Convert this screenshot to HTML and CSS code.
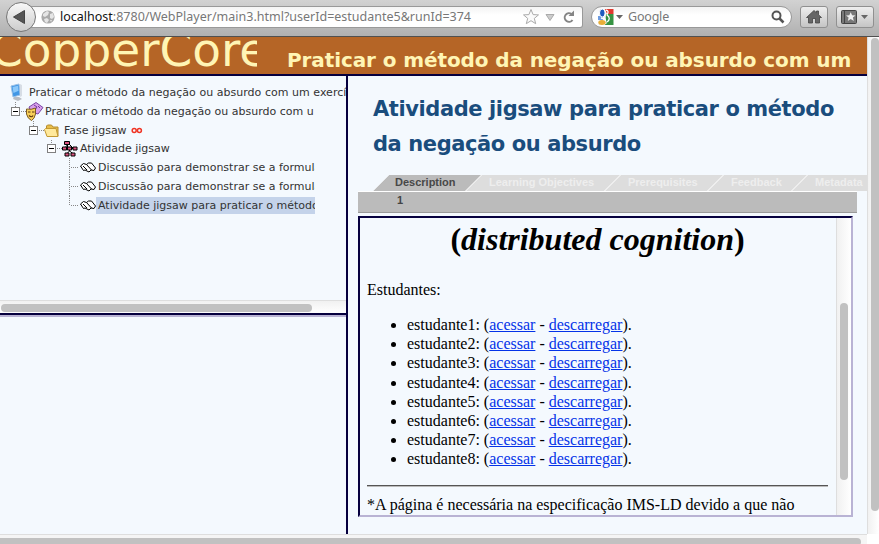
FILE: index.html
```html
<!DOCTYPE html>
<html lang="pt">
<head>
<meta charset="utf-8">
<title>CopperCore</title>
<link rel="stylesheet" href="styles.css">
</head>
<body>
<div class="window">
  <header class="toolbar">
    <div class="back"><svg width="30" height="30" viewBox="0 0 30 30"><path d="M7.500 15 18.500 8.500v13z" fill="#555" stroke="#444"/></svg></div>
    <div class="address">
      <svg class="globe" width="14" height="14" viewBox="0 0 14 14"><circle cx="7" cy="7" r="6.600" fill="#aaa"/><path d="M2 4 6 1l2 1-1 3-3 2-2-1zM9 4l3-1 1 4-2 2-2-1zM3 9l3-1 2 2-2 3-2-1zM9 10l2 0-1 2z" fill="#e5e5e5"/></svg>
      <div class="url"><b>localhost</b>:8780/WebPlayer/main3.html?userId=estudante5&amp;runId=374</div>
      <svg width="58" height="20" viewBox="0 0 58 20"><path d="m7 2.500 2.100 5.100 5.400.3-4.200 3.500 1.400 5.300L7 13.700l-4.700 3 1.400-5.300L-.5 7.900l5.400-.3z" fill="#fafafa" stroke="#aaa"/><path d="M22 7.500h8l-4 6z" fill="#ccc" stroke="#aaa"/><path d="M47.500 7A4.300 4.300 0 1 0 48.500 13" fill="none" stroke="#858585" stroke-width="2"/><path d="M44.500 9h5.500V3.500z" fill="#858585"/></svg>
    </div>
    <div class="search">
      <svg width="28" height="18" viewBox="0 0 28 18"><path d="M8 1h8.500v5H10z" fill="#e03a2f"/><path d="M9 6h7.500v11H8z" fill="#369342"/><path d="M1 8h7v9H1z" fill="#f4f7fb"/><path d="M1 8h5v4H1z" fill="#6d9be0"/><ellipse cx="5.300" cy="5" rx="2.800" ry="4" fill="#1e5bbf" stroke="#fff"/><path d="m4 10 4 1 1 4-3 2" fill="none" stroke="#fff" stroke-width="1.500"/><ellipse cx="5" cy="14.500" rx="3.700" ry="2.500" fill="#e9ae38"/><path d="M9 2c4 1 1 4 1 5 3 2 3 5 0 7" fill="none" stroke="#fff" stroke-width="1.300"/><path d="M19 7h7l-3.500 4z" fill="#666"/></svg>
      <span>Google</span>
      <svg width="14" height="14" viewBox="0 0 14 14"><circle cx="5.500" cy="5.500" r="4" fill="none" stroke="#555" stroke-width="2"/><path d="m8.500 8.500 4 4" stroke="#555" stroke-width="2.500"/></svg>
    </div>
    <div class="tool home"><svg width="18" height="16" viewBox="0 0 18 16"><path d="m1.500 8.500 7.500-7 2.500 2.300V2h2v3.800l3 2.700h-2V14h-4V9.500h-3V14h-4V8.500z" fill="#666" stroke="#444" stroke-width=".8"/></svg></div>
    <div class="tool marks"><svg width="30" height="16" viewBox="0 0 30 16"><rect x="1.500" y="1.500" width="15" height="13" rx="1" fill="#777" stroke="#444"/><path d="M4.500 2v12" stroke="#444"/><path d="m10.700 3.200 1.400 3 3.400.2-2.600 2.200.9 3.400-3.100-1.900-2.900 1.900.8-3.400L6 6.400l3.300-.2z" fill="#eee"/><path d="M21 6h7l-3.500 4z" fill="#666"/></svg></div>
  </header>
  <div class="viewport">
    <div class="page">
      <div class="banner">
        <div class="brand"><span>CopperCore</span></div>
        <div class="course">Praticar o método da negação ou absurdo com um</div>
      </div>
      <div class="frames">
        <aside class="left">
          <nav class="tree">
            <div class="row r0"><svg width="16" height="19" viewBox="0 0 16 19"><path d="M5 14h5l3 2-4 2-5-2z" fill="#b9bdc4"/><path d="m2 3 8-2 1 11-7 2z" fill="#4197e5" stroke="#9bc0e6"/><path d="m3.500 4 5.500-1.200.6 5L4.500 10z" fill="#8bc8fa"/><path d="m11 1 2 1v11l-2 1z" fill="#d7dde5"/></svg><span>Praticar o método da negação ou absurdo com um exercícios</span></div>
            <div class="row r1"><svg width="34" height="19" viewBox="0 0 34 19"><path d="M4.500 0v5M10 9.500h6" class="dots"/><rect x=".5" y="5.500" width="8" height="8" class="box"/><path d="M2 9.500h5" stroke="#000"/><path d="m18 5 7-4.500 7 5-5 6.500-7-2z" fill="#d9a0ec" stroke="#7a46a5"/><path d="m23 3 3 2-2 3m3-4 2 2" fill="none" stroke="#71379b"/><path d="M15.500 7q5 1 9-1v6q-1 5-4 6.500-4-2-5-6.500z" fill="#f8cf58" stroke="#7b5a22"/><path d="M17 10h2.500m1.500 0h2.500M18 13.500q2.500 2.500 4 0" fill="none" stroke="#5a3512" stroke-width="1.200"/></svg><span class="cut c1">Praticar o método da negação ou absurdo com um</span></div>
            <div class="row r2"><svg width="35" height="19" viewBox="0 0 35 19"><path d="M4.500 0v5M10 9.500h5" class="dots"/><rect x=".5" y="5.500" width="8" height="8" class="box"/><path d="M2 9.500h5" stroke="#000"/><path d="M17.500 14V5l1-1h4l1.500 2h5v9z" fill="#e8bd48" stroke="#b48c30"/><path d="m15.500 8.500 1-1H27l2 8H18z" fill="#ffe99b" stroke="#c49a33"/></svg><span>Fase jigsaw</span><svg class="inf" width="12" height="7" viewBox="0 0 12 7"><circle cx="3.200" cy="3.500" r="2" fill="none" stroke="#f03424" stroke-width="1.500"/><circle cx="8.400" cy="3.500" r="2" fill="none" stroke="#f03424" stroke-width="1.500"/></svg></div>
            <div class="row r3"><svg width="33" height="18" viewBox="0 0 33 18"><path d="M4.500 0v4M10 8.500h5" class="dots"/><rect x=".5" y="4.500" width="8" height="8" class="box"/><path d="M2 8.500h5M20.500 4v4M16 8.500h12M22.500 8v3l-3 3m3-3 4 3M21 4l-3 4m4-4 4 4" fill="none" stroke="#000"/><path d="M17.500 1.500h5v3h-5zM15.500 7h4v3h-4zM20.500 7h4v3h-4zM26 7h4v3h-4zM18 13h4v3h-4zM24 13h4v3h-4z" fill="#dc527f" stroke="#000"/></svg><span>Atividade jigsaw</span></div>
            <div class="row leaf"><svg width="29" height="19" viewBox="0 0 29 19"><path d="M1.500 0v19M3 9.500h8" class="dots"/><path d="m12.500 8 3-2.500 3 1 2-1.500h3l4 5-1.500 2.500-3-.5-2 2-4-2-1.500.5zM18.500 6.500l5 5.500M15 8l4 4" fill="#fff" stroke="#000"/></svg><span class="cut">Discussão para demonstrar se a formulação</span></div>
            <div class="row leaf"><svg width="29" height="19" viewBox="0 0 29 19"><path d="M1.500 0v19M3 9.500h8" class="dots"/><path d="m12.500 8 3-2.500 3 1 2-1.500h3l4 5-1.500 2.500-3-.5-2 2-4-2-1.500.5zM18.500 6.500l5 5.500M15 8l4 4" fill="#fff" stroke="#000"/></svg><span class="cut">Discussão para demonstrar se a formulação</span></div>
            <div class="row leaf"><svg width="29" height="19" viewBox="0 0 29 19"><path d="M1.500 0v10M3 9.500h8" class="dots"/><path d="m12.500 8 3-2.500 3 1 2-1.500h3l4 5-1.500 2.500-3-.5-2 2-4-2-1.500.5zM18.500 6.500l5 5.500M15 8l4 4" fill="#fff" stroke="#000"/></svg><span class="cut selected">Atividade jigsaw para praticar o método</span></div>
          </nav>
          <div class="hbar"><i></i></div>
          <div class="lower"></div>
        </aside>
        <main class="right">
          <h2>Atividade jigsaw para praticar o método<br><span>da negação ou absurdo</span></h2>
          <div class="tabs">
            <div class="tab t1">Description</div><div class="tab t2">Learning Objectives</div><div class="tab t3">Prerequisites</div><div class="tab t4">Feedback</div><div class="tab t5">Metadata</div>
          </div>
          <div class="pager">1</div>
          <section class="content">
            <div class="doc">
              <h1>(<em>distributed cognition</em>)</h1>
              <p>Estudantes:</p>
              <ul>
                <li>estudante1: (<a>acessar</a> - <a>descarregar</a>).</li>
                <li>estudante2: (<a>acessar</a> - <a>descarregar</a>).</li>
                <li>estudante3: (<a>acessar</a> - <a>descarregar</a>).</li>
                <li>estudante4: (<a>acessar</a> - <a>descarregar</a>).</li>
                <li>estudante5: (<a>acessar</a> - <a>descarregar</a>).</li>
                <li>estudante6: (<a>acessar</a> - <a>descarregar</a>).</li>
                <li>estudante7: (<a>acessar</a> - <a>descarregar</a>).</li>
                <li>estudante8: (<a>acessar</a> - <a>descarregar</a>).</li>
              </ul>
              <hr>
              <p class="note">*A página é necessária na especificação IMS-LD devido a que não</p>
            </div>
            <div class="vbar inner"><i></i></div>
          </section>
        </main>
      </div>
    </div>
    <div class="vbar outer"><i></i></div>
  </div>
  <div class="bottom"><div class="track"><i></i></div></div>
</div>
</body>
</html>
```
FILE: styles.css
```css
* { box-sizing: border-box; }
body { margin: 0; overflow: hidden; background: #fff; font-family: "DejaVu Sans", sans-serif; }
svg { display: block; flex: none; overflow: visible; }
.window { width: 879px; height: 544px; display: flex; flex-direction: column; overflow: hidden; }

.toolbar { height: 37px; flex: none; display: flex; align-items: flex-start; background: linear-gradient(#d2d2d2, #b0b0b0); border-bottom: 1px solid #505050; padding: 6px 0 0 6px; }
.back { width: 30px; height: 30px; margin-top: -4px; border-radius: 50%; border: 1px solid #777; background: linear-gradient(#f8f8f8, #ccc); z-index: 1; }
.back svg { margin: -1px; }
.address { width: 552px; height: 22px; margin-left: -5px; padding-left: 10px; display: flex; align-items: center; border: 1px solid #999; border-left: 0; border-radius: 0 3px 3px 0; background: linear-gradient(#f4f4f4, #fff 40%); }
.url { flex: 1; margin-left: 5px; font: 12.5px/20px "Noto Sans", sans-serif; color: #777; white-space: nowrap; letter-spacing: 0; }
.url b { font-weight: 400; color: #111; }
.search { width: 201px; height: 22px; margin-left: 8px; padding: 0 6px 0 5px; display: flex; align-items: center; border: 1px solid #999; border-radius: 11px; background: linear-gradient(#f4f4f4, #fff 40%); }
.search span { flex: 1; margin-left: 3px; font: 12.5px/20px "Noto Sans", sans-serif; color: #777; letter-spacing: -.2px; }
.tool { height: 22px; display: flex; align-items: center; justify-content: center; border: 1px solid #909090; border-radius: 3px; background: linear-gradient(#eee, #c5c5c5); }
.home { width: 28px; margin-left: 8px; }
.marks { width: 38px; margin-left: 8px; }

.viewport { height: 497px; flex: none; display: flex; }
.page { width: 867px; flex: none; background: #f4f9fe; overflow: hidden; }
.banner { height: 39px; display: flex; background: #b56526; border-bottom: 2px solid #06003f; color: #fff5b5; }
.brand { width: 257px; flex: none; height: 33px; overflow: hidden; font-size: 47px; line-height: 56px; white-space: nowrap; }
.brand span { display: block; margin: -15px 0 0 -10px; }
.course { margin-left: 30px; flex: none; font-size: 20px; font-weight: bold; line-height: 24px; padding-top: 11px; white-space: nowrap; letter-spacing: -.1px; }
.frames { display: flex; height: 458px; }
.left { width: 348px; flex: none; border-right: 2px solid #06003f; display: flex; flex-direction: column; overflow: hidden; }
.tree { height: 224px; padding-top: 7px; overflow: hidden; font-size: 11px; color: #333; }
.row { height: 19px; line-height: 19px; display: flex; white-space: nowrap; }
.row > span { flex: none; }
.r0 { padding-left: 9px; }
.r0 span { margin-left: 4px; letter-spacing: .03px; }
.r1 { padding-left: 11px; }
.r2 { padding-left: 29px; }
.r3 { padding-left: 47px; height: 18px; line-height: 18px; }
.leaf { padding-left: 68px; }
.leaf .cut { width: 219px; height: 17px; line-height: 17px; margin: 1px 0 0 -1px; padding-left: 1px; text-indent: 1px; overflow: hidden; }
.c1 { width: 269px; overflow: hidden; }
.selected { background: #c4d3ea; }
.inf { margin: 6px 0 0 4px; }
.dots { fill: none; stroke: #888; stroke-dasharray: 1 1; }
.box { fill: #fff; stroke: #808080; }
.hbar { height: 13px; border-top: 1px solid #dedede; padding: 3px 1px; background: linear-gradient(#f1f1f1, #fff); }
.hbar i { display: block; width: 311px; height: 8px; border-radius: 4px; background: #c1c1c1; }
.lower { flex: 1; border-top: 2px solid #06003f; box-shadow: inset 0 2px #b9b3d4; }

.right { width: 519px; flex: none; padding: 16px 0 0 10px; }
h2 { margin: 0 0 0 15px; font-size: 21px; line-height: 35px; color: #1a4d7d; white-space: nowrap; height: 83px; letter-spacing: -.41px; }
.tabs { margin-left: 15px; height: 16px; display: flex; overflow: hidden; background: #fff; clip-path: polygon(16px 0, 100% 0, 100% 100%, 0 100%); font: bold 11px/15px "Liberation Sans", sans-serif; color: #eee; }
.tab { flex: none; margin-left: -15px; padding-left: 23px; height: 16px; white-space: nowrap; background: #ddd; clip-path: polygon(16px 0, 100% 0, calc(100% - 16px) 100%, 0 100%); }
.t1 { width: 108px; margin-left: 0; background: #bbb; color: #484848; padding-left: 22px; }
.t2 { width: 154px; }
.t3 { width: 118px; }
.t4 { width: 99px; }
.t5 { width: 92px; }
.pager { width: 499px; height: 22px; border-top: 1px solid #fff; border-bottom: 1px solid #999; background: #bbb; padding-left: 39px; font: bold 11px/17px "Liberation Sans", sans-serif; color: #444; }
.content { width: 495px; height: 301px; margin-top: 3px; display: flex; border: 2px solid; border-color: #06003f #b9b3d4 #b9b3d4 #06003f; }
.doc { width: 476px; flex: none; padding: 1.900px 8px 0 7px; height: 297px; overflow: hidden; font: 16px/19.200px "Liberation Serif", serif; color: #000; }
h1 { margin: 0 0 21.400px; font-size: 32px; line-height: 38.400px; text-align: center; }
.doc p { margin: 0 0 16px; }
ul { margin: 0 0 16px; padding-left: 40px; }
a { color: #0433e8; text-decoration: underline; }
hr { margin: 0 0 8px; border: 0; height: 2px; border-top: 1px solid #555; border-bottom: 1px solid #bbb; }
.doc .note { white-space: nowrap; }
.vbar { border-left: 1px solid #dedede; background: linear-gradient(90deg, #f1f1f1, #fff); padding-left: 3px; }
.vbar i { display: block; width: 8px; background: #c1c1c1; border-radius: 4px; }
.inner { width: 15px; }
.inner i { margin-top: 85px; height: 177px; }
.outer { width: 12px; flex: none; }
.outer i { margin-top: 1px; height: 473px; }
.bottom { height: 10px; background: #fff; }
.track { width: 867px; height: 10px; background: #f5f5f5; border-top: 1px solid #dedede; padding-top: 3px; }
.track i { display: block; width: 861px; height: 8px; border-radius: 0 4px 4px 0; background: #c1c1c1; }
```
